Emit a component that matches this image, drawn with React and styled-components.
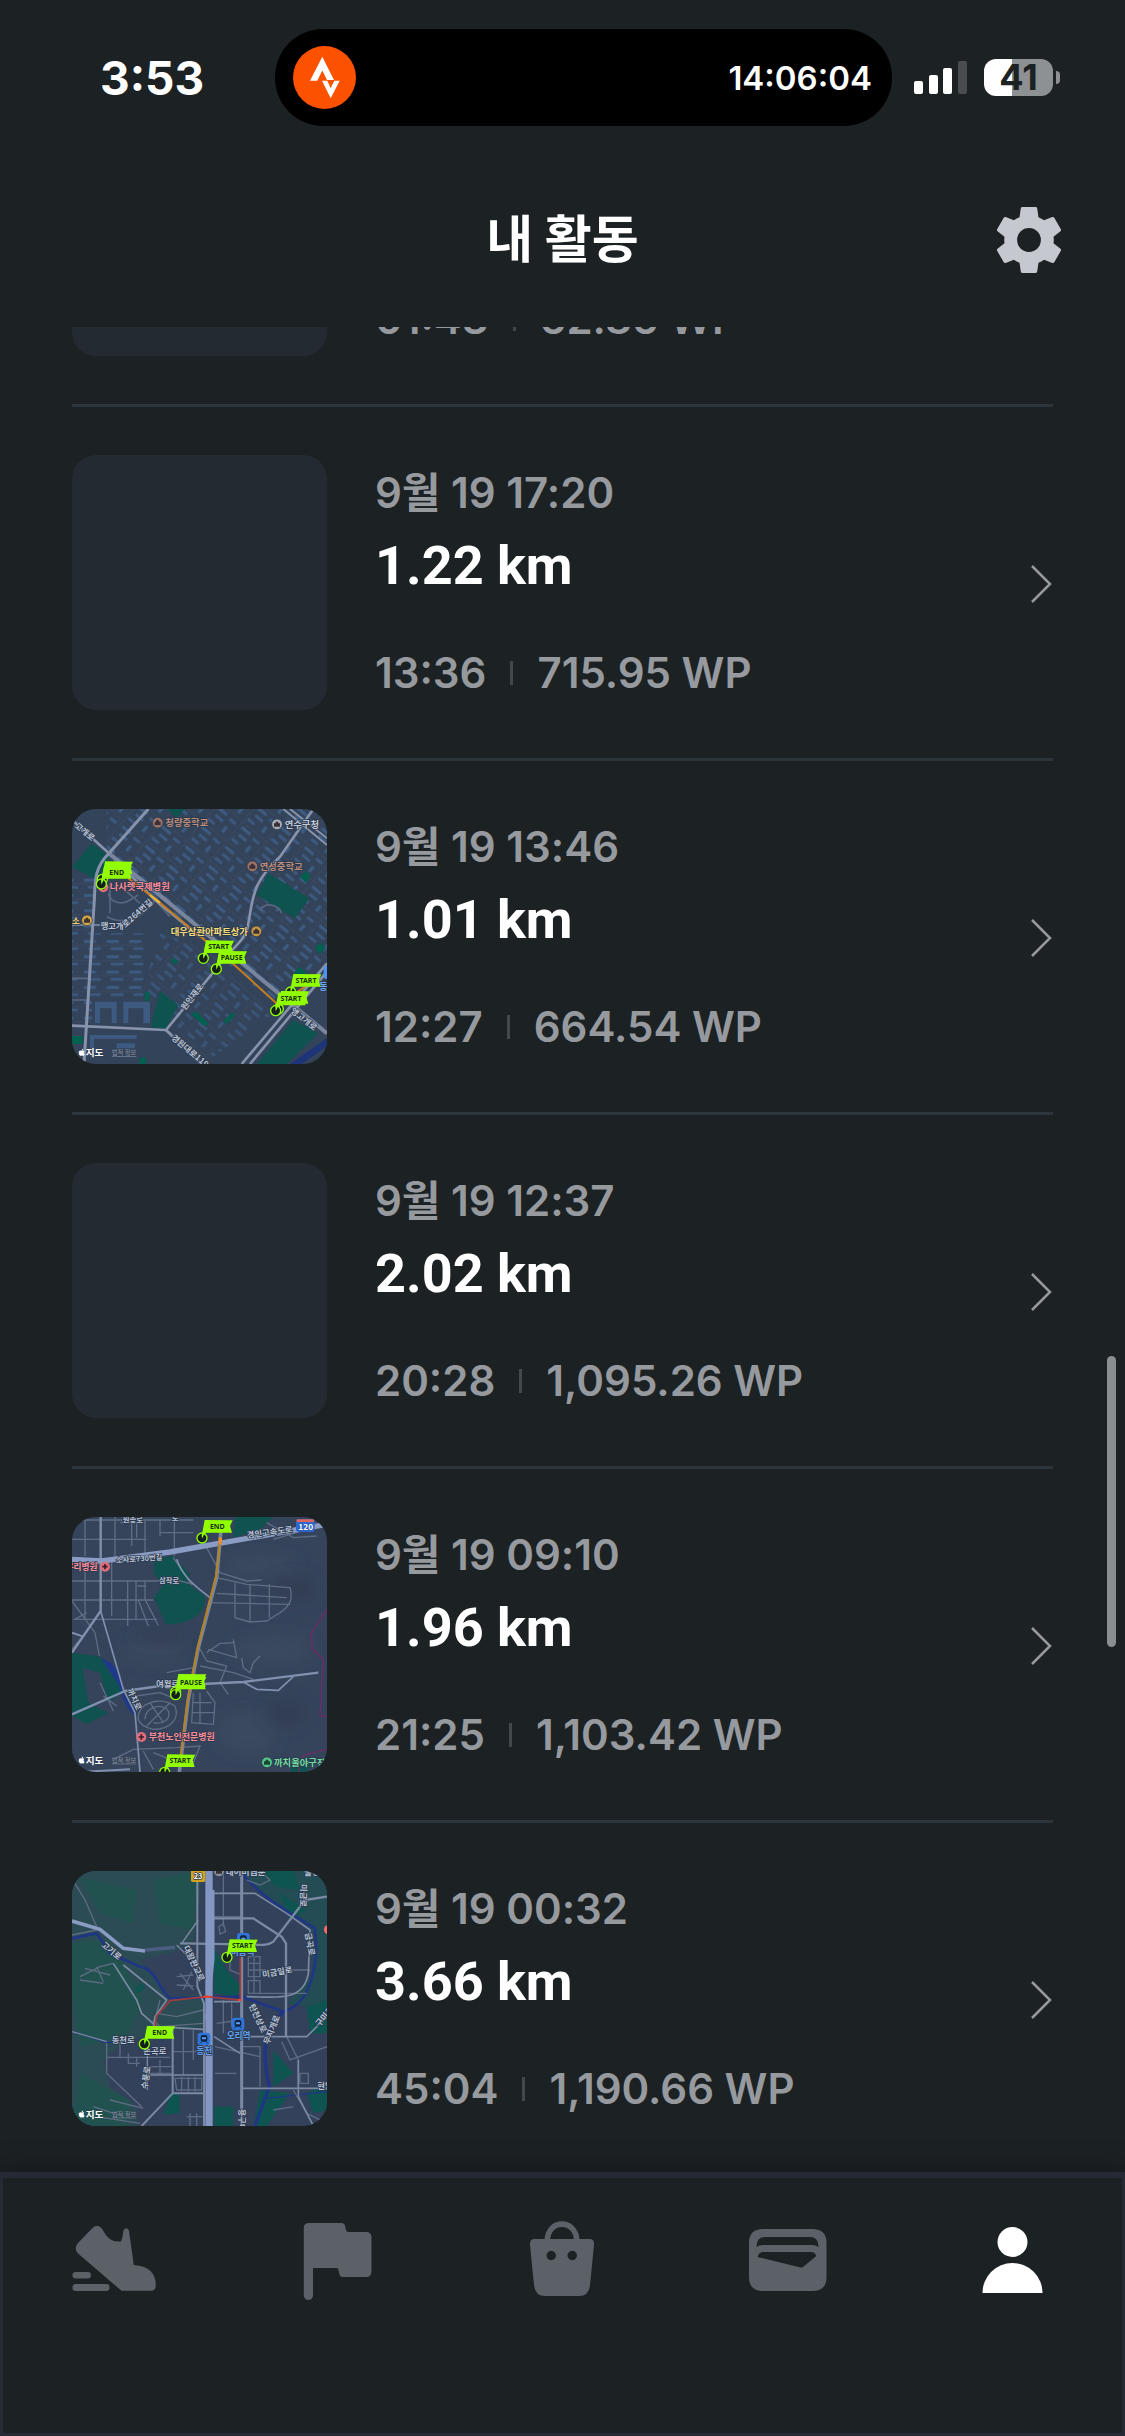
import React, { useEffect, useRef } from "react";
import styled, { createGlobalStyle } from "styled-components";
import { FaApple } from "react-icons/fa";

const sans = `Inter, "Noto Sans CJK KR", sans-serif`;

const GlobalStyle = createGlobalStyle`
  * {
    box-sizing: border-box;
  }

  body {
    margin: 0;
    background-color: #1c2124;
    color: #fff;
    font-family: ${sans};
  }
`;

const Screen = styled.div`
  display: flex;
  flex-direction: column;
  height: 100vh;
  overflow: hidden;
`;

const StatusBar = styled.div`
  display: grid;
  grid-template-columns: 275fr 617fr 233fr;
  align-items: center;
  height: 155px;
  flex-shrink: 0;
`;

const Clock = styled.time`
  padding-left: 100px;
  font-size: 46px;
  font-weight: 700;
  line-height: 54px;
`;

const Island = styled.div`
  display: flex;
  align-items: center;
  justify-content: space-between;
  height: 97px;
  padding: 0 20px 0 18px;
  border-radius: 48px;
  background-color: #000;
  font-size: 33px;
  font-weight: 600;
`;

const Signals = styled.div`
  display: flex;
  align-items: center;
  gap: 17px;
  padding-left: 22px;
`;

const Battery = styled.div`
  position: relative;
  width: 69px;
  height: 37px;
  border-radius: 12px;
  background: linear-gradient(to right, #fff 41%, #8e9193 41%);
  color: #1c2124;
  font-size: 36px;
  font-weight: 700;
  line-height: 36px;
  text-align: center;

  &::after {
    content: "";
    position: absolute;
    top: 12px;
    right: -7px;
    width: 4px;
    height: 13px;
    border-radius: 0 4px 4px 0;
    background-color: #8e9193;
  }
`;

const Header = styled.header`
  display: grid;
  grid-template-columns: 1fr auto 1fr;
  align-items: center;
  height: 172px;
  padding: 0 63px 2px;
  flex-shrink: 0;
`;

const Title = styled.h1`
  grid-column: 2;
  margin: 0;
  padding-bottom: 8px;
  font-family: "Noto Sans CJK KR", sans-serif;
  font-size: 51px;
  font-weight: 700;
  line-height: 72px;
`;

const IconButton = styled.button`
  justify-self: end;
  padding: 0;
  border: 0;
  background: none;
  color: #c5c8cf;

  svg {
    display: block;
  }
`;

const Content = styled.main`
  position: relative;
  flex: 1;
  min-height: 0;
`;

const List = styled.ul`
  height: 100%;
  margin: 0;
  padding: 0 72px;
  overflow-y: auto;
  list-style: none;
  scrollbar-width: none;
`;

const ScrollThumb = styled.div`
  position: absolute;
  top: 1029px;
  right: 9px;
  width: 9px;
  height: 291px;
  border-radius: 5px;
  background-color: #8b8e90;
`;

const Row = styled.a`
  display: flex;
  align-items: center;
  gap: 48px;
  padding: 48px 0;
  border-bottom: 3px solid #2c353c;
  color: #969a9f;
  text-decoration: none;
`;

const Thumb = styled.div`
  width: 255px;
  height: 255px;
  flex-shrink: 0;
  overflow: hidden;
  border-radius: 24px;
  background-color: #242a32;

  svg {
    display: block;
  }
`;

const Info = styled.div`
  flex: 1;
  font-size: 42px;
  font-weight: 600;
  line-height: 54px;
`;

const Distance = styled.div`
  margin: 10px 0 44px;
  color: #fff;
  font-family: Roboto, sans-serif;
  font-size: 54px;
  font-weight: 700;
  line-height: 72px;
`;

const Meta = styled.div`
  display: flex;
  align-items: center;
  gap: 24px;
`;

const Separator = styled.span`
  width: 3px;
  height: 24px;
  background-color: #43484c;
`;

const TabBar = styled.nav`
  position: relative;
  display: grid;
  grid-template-columns: repeat(5, 1fr);
  align-items: start;
  height: 264px;
  padding-top: 40px;
  flex-shrink: 0;
  border-top: 3px solid #262a34;
  background-color: #1c2124;
  box-shadow: inset 0 0 0 3px #262a34, 0 -6px 24px rgba(0, 0, 0, 0.25);
`;

const Tab = styled.button`
  display: flex;
  justify-content: center;
  padding: 0;
  border: 0;
  background: none;
  color: ${(props) => (props.$active ? "#fff" : "#5b6167")};
`;

const Label = styled.text`
  fill: ${(props) => props.$color || "#b9c3d6"};
  stroke: #29364a;
  stroke-width: ${(props) => props.$halo || 4}px;
  paint-order: stroke;
  font-family: "Noto Sans CJK KR", sans-serif;
  font-size: ${(props) => props.$size || 25}px;
  font-weight: ${(props) => props.$weight || 700};
`;

const FlagText = styled.text`
  fill: #1a3010;
  font-family: "Noto Sans", sans-serif;
  font-size: 21px;
  font-weight: 700;
  text-anchor: middle;
`;

function Marker({ x, y, label }) {
  return (
    <g transform={`translate(${x} ${y})`}>
      <path
        d="M8 -54 L92 -53 L84 -36 L90 -16 H12 L5 -6 L0 -12 Z"
        fill="#91ff00"
      />
      <circle r="15" fill="#14201c" stroke="#91ff00" strokeWidth="4" />
      <path d="M0 2 L-1 -14 L8 -14 Z" fill="#91ff00" />
      {label && (
        <FlagText x="46" y="-28">
          {label}
        </FlagText>
      )}
    </g>
  );
}

function Poi({ x, y, color, mark = "#3b3037" }) {
  return (
    <g transform={`translate(${x} ${y})`}>
      <circle r="16" fill={color} stroke="#29364a" strokeWidth="2" />
      <path d="M-9 7 V-3 H-4 V-8 H4 V-3 H9 V7 Z" fill={mark} />
    </g>
  );
}

function Hospital({ x, y }) {
  return (
    <g transform={`translate(${x} ${y})`}>
      <circle r="15" fill="#e06c7c" />
      <path d="M-8 0 H8 M0 -8 V8" stroke="#3a1c2a" strokeWidth="5" />
    </g>
  );
}

function Station({ x, y }) {
  return (
    <g transform={`translate(${x} ${y})`}>
      <rect x="-19" y="-19" width="38" height="38" rx="9" fill="#2f74d8" />
      <rect x="-10" y="-12" width="20" height="20" rx="6" fill="#10233f" />
      <path d="M-6 -5 H6 V1 H-6 Z" fill="#5b9df0" />
      <path d="M-7 8 L-11 13 M7 8 L11 13" stroke="#10233f" strokeWidth="3" />
    </g>
  );
}

function MapCredit({ y }) {
  return (
    <>
      <FaApple x="53" y={y - 23} size={24} color="#fff" />
      <Label x="77" y={y} $size={29} $color="#fff" $halo={1}>
        지도
      </Label>
      <Label
        x="155"
        y={y - 3}
        $size={19}
        $weight={400}
        $color="#8d96a6"
        $halo={1}
        textDecoration="underline"
      >
        법적 정보
      </Label>
    </>
  );
}

function YeonsuMap() {
  return (
    <svg width="255" height="255" viewBox="36 27 765 765">
      <defs>
        <pattern
          id="blocks"
          width="92"
          height="76"
          patternUnits="userSpaceOnUse"
          patternTransform="rotate(40)"
        >
          <path d="M0 2 H92 M2 0 V76" stroke="#424f67" strokeWidth="1.5" />
          <path
            d="M10 12 H44 V21 H10 Z M58 16 H82 V25 H58 Z M18 34 H48 V43 H18 Z M8 57 H34 V66 H8 Z M62 44 H72 V66 H62 Z"
            fill="#3d5a80"
          />
        </pattern>
        <pattern
          id="houses"
          width="68"
          height="46"
          patternUnits="userSpaceOnUse"
        >
          <path d="M4 6 H40 V15 H4 Z M16 28 H54 V36 H16 Z" fill="#3d5a80" />
          <path d="M0 22 H68" stroke="#424f67" strokeWidth="1.5" />
        </pattern>
      </defs>
      <rect x="36" y="27" width="765" height="765" fill="#33435a" />
      <path d="M140 27 H801 V520 L660 630 L140 165 Z" fill="url(#blocks)" />
      <path
        d="M300 400 L430 440 L640 640 L430 792 L250 560 Z"
        fill="url(#blocks)"
        opacity="0.8"
      />
      <path
        d="M36 230 H105 L95 670 H36 Z M105 400 H250 V600 H90 Z"
        fill="url(#houses)"
      />
      <path
        d="M105 605 H170 V670 H155 V625 H120 V670 H105 Z M190 605 H270 V670 H250 V625 H205 V670 H190 Z M90 705 H230 V716 H102 V745 H90 Z M170 730 H225 V745 H170 Z"
        fill="#3d5a80"
      />
      <g fill="#0f5350">
        <path d="M95 130 L150 170 L110 240 L36 200 Z" />
        <path d="M625 220 L748 295 L705 355 L590 285 Z" />
        <path d="M300 573 L355 615 L315 690 L272 680 Z" />
        <path d="M700 660 L775 700 L680 792 H590 Z" />
        <path d="M322 27 H375 L350 55 Z" />
      </g>
      <g fill="#026050">
        <path d="M738 213 L752 230 L738 248 L720 230 Z" />
        <path d="M781 428 L797 444 L780 462 L764 444 Z" />
        <path d="M718 500 L738 515 L722 535 L702 518 Z" />
        <path d="M405 632 L445 668 L436 680 L395 645 Z" />
        <path d="M518 636 L526 645 L500 672 L490 664 Z" />
        <path d="M255 575 H268 V602 H255 Z M36 708 H68 V732 H36 Z M238 773 H258 V792 H238 Z" />
        <path d="M338 472 L355 485 L346 494 L332 482 Z" />
      </g>
      <path d="M690 792 L801 715 V738 L725 792 Z" fill="#1e3478" />
      <g fill="none" stroke="#58677f" strokeWidth="5">
        <path d="M145 280 C150 310 190 315 210 300 L235 285 M140 350 C200 380 250 350 285 300" />
        <path d="M150 250 V340 M200 275 L240 310 M36 535 H90 M36 600 H90" />
        <path d="M600 330 C620 300 660 320 665 340 M285 300 L330 350" />
      </g>
      <g fill="none" stroke="#8793ab" strokeLinejoin="round">
        <path d="M36 60 L147 160 L285 300 L420 410" strokeWidth="8" />
        <path d="M147 160 L801 700" strokeWidth="12" stroke="#78859d" />
        <path d="M265 27 L147 160 C105 200 105 240 103 300 L72 792" strokeWidth="9" />
        <path
          d="M760 27 L660 170 C575 250 580 290 565 370 C560 420 520 440 490 480 L318 690 L36 677"
          strokeWidth="8"
        />
        <path d="M318 690 L425 792" strokeWidth="9" />
        <path d="M801 490 L545 792 M801 515 L570 792" strokeWidth="8" />
        <path d="M670 27 L801 135 M690 27 L801 115" strokeWidth="6" />
        <path d="M36 375 H120" strokeWidth="4" />
      </g>
      <path
        d="M205 235 L290 300 L440 425 L520 492 L655 615 L735 560"
        fill="none"
        stroke="#c67c1c"
        strokeWidth="6"
      />
      <path d="M270 285 L300 308" stroke="#f7b928" strokeWidth="6" />

      <Label x="42" y="80" transform="rotate(40 42 80)">
        고개로
      </Label>
      <Label x="122" y="386">맹고개</Label>
      <Label x="196" y="384" transform="rotate(-42 196 384)">
        로264번길
      </Label>
      <Label x="375" y="632" transform="rotate(-52 375 632)">
        원인재로
      </Label>
      <Label x="690" y="636" transform="rotate(38 690 636)">
        앵고개로
      </Label>
      <Label x="332" y="716" transform="rotate(40 332 716)">
        경원대로119
      </Label>
      <Poi x={293} y={68} color="#9c7466" />
      <Label x="316" y="79" $size={28} $color="#bb8d7c">
        청량중학교
      </Label>
      <Poi x={651} y={73} color="#a9afb8" />
      <Label x="674" y="83" $size={28} $color="#c2cad6">
        연수구청
      </Label>
      <Poi x={577} y={199} color="#9c7466" />
      <Label x="599" y="209" $size={28} $color="#bb8d7c">
        연성중학교
      </Label>
      <Hospital x={130} y={262} />
      <Label x="149" y="271" $size={28} $color="#ff8c98">
        나사렛국제병원
      </Label>
      <Label x="36" y="371" $color="#f2d06b">
        소
      </Label>
      <Poi x={81} y={361} color="#d5a83e" />
      <Label x="332" y="404" $size={28} $color="#f7dc78">
        대우삼환아파트상가
      </Label>
      <Poi x={589} y={394} color="#c9993f" />
      <rect x="791" y="498" width="20" height="38" rx="6" fill="#4c93f5" />
      <Label x="777" y="569" $size={28} $color="#6da9ff">
        동
      </Label>
      <Marker x={127} y={238} />
      <Marker x={124} y={252} label="END" />
      <Marker x={430} y={475} label="START" />
      <Marker x={469} y={507} label="PAUSE" />
      <Marker x={692} y={576} label="START" />
      <Marker x={655} y={627} />
      <Marker x={647} y={632} label="START" />
      <MapCredit y={768} />
    </svg>
  );
}

function BucheonMap() {
  return (
    <svg width="255" height="255" viewBox="36 33 765 765">
      <defs>
        <filter id="hills">
          <feGaussianBlur stdDeviation="22" />
        </filter>
      </defs>
      <rect x="36" y="33" width="765" height="765" fill="#35445b" />
      <g fill="#3a495f" filter="url(#hills)">
        <ellipse cx="600" cy="180" rx="110" ry="30" />
        <ellipse cx="280" cy="430" rx="90" ry="36" />
        <ellipse cx="640" cy="430" rx="120" ry="40" />
        <ellipse cx="560" cy="680" rx="90" ry="60" />
      </g>
      <g fill="#303d52" filter="url(#hills)">
        <ellipse cx="700" cy="250" rx="70" ry="40" />
        <ellipse cx="300" cy="390" rx="80" ry="20" />
        <ellipse cx="680" cy="620" rx="60" ry="40" />
      </g>
      <g fill="#10524f">
        <path d="M282 160 L340 150 L390 205 L380 230 L435 270 C440 330 380 355 318 355 L282 275 L310 235 L282 205 Z" />
        <path d="M525 33 H640 L600 70 L520 95 Z" />
        <path d="M36 440 L110 450 C170 480 195 520 185 560 L145 590 L120 500 L68 485 L85 590 L145 620 L80 655 L36 630 Z" />
        <path d="M700 770 L760 760 L740 798 H690 Z" />
      </g>
      <path
        d="M125 460 C160 460 195 520 190 560 C210 590 220 610 222 630 C195 600 185 570 178 540 Z"
        fill="#20388a"
      />
      <g fill="none" stroke="#5f6d84" strokeWidth="4">
        <path d="M36 42 H400 M36 100 H260 M36 225 H360 L400 235 M36 282 H280 M40 340 H290" />
        <path d="M75 33 V150 M165 33 V150 M215 33 V120 M255 42 V150 M343 33 V150 M75 160 V340" />
        <path d="M155 170 V330 M203 225 V360 M228 225 V340 M255 225 V280 L295 358 M235 282 L265 360" />
        <path d="M181 50 H230 V95 M300 42 V90 M300 80 H400 M232 240 H258" />
        <path d="M36 285 L105 380 L118 450 M45 340 L80 320 M60 400 L36 430" />
        <path d="M470 215 L560 235 L690 245 C700 280 690 300 660 320 L620 345 L570 348 L525 335 V230 M450 290 L690 295 M570 235 V348 M628 235 V335 M470 262 L680 275" />
        <path d="M340 155 L395 235 M440 125 L480 200 L560 225 L605 222" />
        <path d="M415 420 L440 465 L500 480 L480 530 L505 565 M445 430 L530 455 L520 400 M420 480 L520 500 L580 520 M440 440 L480 412 L525 410" />
        <path d="M545 455 L550 485 L570 500 L580 470 L600 450 M320 500 L400 485" />
        <path d="M228 570 L300 560 L350 580 M235 640 C230 590 300 570 345 600 C360 640 330 670 280 670 C250 665 240 655 235 640 M255 640 C255 600 310 590 325 615 C335 645 300 655 280 650 M270 590 L310 650 M330 590 L260 660" />
        <path d="M400 560 L395 650 L460 655 L465 590 L440 555 M420 560 V650 M400 590 H455 M398 620 H465" />
        <path d="M160 760 L220 730 L350 725 L420 720 L400 770 M250 735 L280 790 M280 740 L330 760" />
        <path d="M120 530 L160 615 M130 570 L170 600" />
        <path d="M620 50 L700 95 L770 90 M640 100 L760 65" />
      </g>
      <g fill="none" stroke="#8090ad" strokeLinejoin="round">
        <path d="M122 33 V315 L70 390 L36 440" strokeWidth="7" />
        <path d="M122 315 L190 550 L225 620 L240 798" strokeWidth="5" />
        <path
          d="M36 160 L125 165 L330 138 L801 55"
          strokeWidth="16"
          stroke="#8a9cc4"
        />
        <path d="M36 625 L195 555 L300 540 L550 528 L775 500" strokeWidth="7" />
        <path d="M550 528 L590 550 L655 553 L700 512" strokeWidth="5" />
        <path d="M350 160 C370 220 420 250 450 275" strokeWidth="5" />
        <path d="M36 380 L70 392 M60 798 L210 790" strokeWidth="6" />
      </g>
      <path
        d="M801 310 L752 385 L758 430 L790 460 L780 630 L801 632 M801 730 L730 748 L715 798"
        fill="none"
        stroke="#6e2c66"
        strokeWidth="4"
      />
      <path
        d="M484 60 L470 215 L415 425 L385 580 L358 798"
        fill="none"
        stroke="#77859d"
        strokeWidth="11"
      />
      <path
        d="M482 95 L468 210 L412 430 L382 590 L362 750"
        fill="none"
        stroke="#b8811f"
        strokeWidth="6"
      />
      <path d="M481 95 L480 115" stroke="#ff8a1e" strokeWidth="9" />

      <Label x="188" y="47" $size={22}>
        원종로
      </Label>
      <Label x="335" y="43" $size={22}>
        로
      </Label>
      <Label x="168" y="171" $size={22} transform="rotate(-4 168 171)">
        소사로730번길
      </Label>
      <Label x="562" y="97" transform="rotate(-8 562 97)">
        경인고속도로
      </Label>
      <Label x="297" y="230" $size={22}>
        삼작로
      </Label>
      <Label x="288" y="544">여월로</Label>
      <Label x="200" y="552" transform="rotate(65 200 552)">
        까치로
      </Label>
      <rect x="708" y="40" width="56" height="38" rx="8" fill="#2d68d2" />
      <path d="M710 48 V40 H762 V48 Z" fill="#e0665c" />
      <Label x="715" y="72" $color="#fff" $halo={1}>
        120
      </Label>
      <Label x="17" y="192" $size={26} $color="#ff8c98">
        우리병원
      </Label>
      <Hospital x={135} y={182} />
      <Hospital x={244} y={693} />
      <Label x="266" y="703" $size={27} $color="#ff8c98">
        부천노인전문병원
      </Label>
      <Poi x={621} y={769} color="#58c58b" mark="#174634" />
      <Label x="642" y="779" $size={28} $color="#74dca0">
        까치울야구장
      </Label>
      <Marker x={426} y={96} label="END" />
      <Marker x={347} y={558} />
      <Marker x={347} y={566} label="PAUSE" />
      <Marker x={314} y={799} label="START" />
      <MapCredit y={773} />
    </svg>
  );
}

function BundangMap() {
  return (
    <svg width="255" height="255" viewBox="36 33 765 765">
      <rect x="36" y="33" width="765" height="765" fill="#33415a" />
      <path
        d="M36 33 H430 L400 250 L330 280 L240 300 L330 410 L440 400 L430 500 L200 540 L130 600 L150 680 L230 740 V798 H36 Z"
        fill="#2b4c54"
      />
      <g fill="#21554e" opacity="0.75">
        <path d="M36 250 L150 240 L250 420 L200 530 L60 560 L36 400 Z" />
        <path d="M280 60 L410 33 L400 210 L300 190 Z" />
        <path d="M60 640 L210 720 L200 798 H36 Z" />
        <path d="M60 50 L230 90 L220 190 L120 160 Z" />
      </g>
      <path
        d="M540 33 H801 V450 L680 430 L760 340 L745 200 L640 130 Z"
        fill="#244c54"
      />
      <g fill="#0e5450">
        <path d="M462 265 L500 330 L545 380 L530 410 L462 400 Z" />
        <path d="M330 700 L358 700 V760 L310 765 Z M462 740 L520 740 V798 H462 Z" />
        <path d="M225 385 L245 368 L255 385 L235 400 Z M640 570 L700 640 L640 680 Z" />
        <path d="M740 440 L801 420 V520 L750 520 Z M660 100 L740 150 L690 180 Z M601 690 L690 700 L620 798 H580 Z" />
        <path d="M740 700 L801 670 V750 L760 760 Z M600 33 H700 L720 90 L650 80 Z" />
      </g>
      <g fill="none" stroke="#1f3585" strokeWidth="8">
        <path d="M540 33 C600 110 690 160 765 205 C775 300 760 430 670 455 L545 410 L330 415 C290 380 290 330 240 320 L150 280 L110 220 L36 235" />
        <path
          d="M670 455 C600 520 610 600 628 680 L585 798"
          strokeWidth="10"
        />
        <path
          d="M36 515 L140 548 L230 545 M620 715 L801 695"
          strokeWidth="4"
        />
      </g>
      <g fill="none" stroke="#5e6c83" strokeWidth="4">
        <path d="M45 70 L75 120 L110 200 M36 225 L110 210 M60 350 L120 320 L160 310 M60 360 L130 370 M75 325 L150 345 M110 320 L130 365" />
        <path d="M350 350 L400 345 M360 340 L400 390 M370 390 L395 335 M350 375 L400 378" />
        <path d="M140 550 V640 L245 740 M180 545 V590 M140 592 H330 M205 580 V610 H240 M230 590 V620 M262 620 H335 M260 640 H335 M300 600 V640" />
        <path d="M280 480 L300 500 L430 490 M300 420 L290 460 L350 470 L430 450" />
        <path d="M340 575 H430 M370 510 V645 M400 510 V600 M345 655 H425 V690 H350 Z M365 650 V695 M385 650 V695 M405 650 V695" />
        <path d="M490 33 V200 M477 200 L490 190 L497 215 L480 222 Z M462 100 H540 M545 170 H462" />
        <path d="M565 290 H600 V350 H565 Z M565 362 H600 V400 H565 Z M565 310 H600 M565 330 H600 M582 290 V400 M510 280 V330 L545 345" />
        <path d="M470 490 L540 480 M490 420 V520 M515 430 V500 M545 560 H600 V680 M465 640 L530 640 M465 560 L600 590" />
        <path d="M680 530 L715 600 V680 M720 640 H745 V670 H720 Z M665 545 L690 600 L801 560 M600 330 H750 M600 400 L740 400" />
        <path d="M100 740 L190 770 M150 720 L250 745 M110 770 L240 790 M380 770 H430 M390 760 V798 M410 760 V798" />
        <path d="M700 690 L740 760 L801 790 M640 750 L700 740 M600 33 L630 60 L600 75 L560 60" />
      </g>
      <g fill="none" stroke="#7c89a3" strokeWidth="7" strokeLinejoin="round">
        <path
          d="M160 310 L230 420 L245 460 L290 500 L430 508 M190 315 L320 420 L285 470 L280 500"
          strokeWidth="5"
        />
        <path
          d="M462 100 H585 L680 160 L750 210 L745 340 C730 430 640 410 560 410"
          strokeWidth="5"
        />
        <path d="M462 175 H580 L665 230 L678 250 V530 M801 110 L735 120 L640 245 C620 260 600 253 550 253 L360 250" />
        <path d="M545 33 V798" strokeWidth="9" />
        <path
          d="M412 60 V380 L432 430 V798 M338 510 V700 H430 M338 700 L245 798"
          strokeWidth="6"
        />
        <path
          d="M462 425 H540 M570 530 H740 L801 470 M462 530 L540 580 M545 685 H801 M715 600 V710 L760 798"
          strokeWidth="5"
        />
        <path d="M262 645 H430 M262 575 V690 M36 515 L140 545" strokeWidth="4" />
        <path d="M365 250 L415 180 M350 255 L405 310" strokeWidth="4" />
      </g>
      <path
        d="M36 183 L120 208 L190 265 L255 273"
        fill="none"
        stroke="#8a9bc4"
        strokeWidth="11"
      />
      <path d="M255 270 L345 262" stroke="#4c5d7f" strokeWidth="11" />
      <path d="M447 33 V798" stroke="#8496c2" strokeWidth="22" />
      <path
        d="M459 90 V300 L440 480"
        fill="none"
        stroke="#8496c2"
        strokeWidth="9"
      />
      <path
        d="M541 285 V420 L440 410 L330 422 L290 468 L285 500"
        fill="none"
        stroke="#a03a3c"
        strokeWidth="5"
      />
      <path d="M430 410 H450 M534 420 H544" stroke="#ff3b25" strokeWidth="6" />

      <rect x="393" y="22" width="43" height="44" rx="5" fill="#d3a31f" />
      <Label x="401" y="56" $size={22} $color="#fff">
        23
      </Label>
      <Poi x={477} y={34} color="#8a919c" />
      <Label x="497" y="46" $size={26}>
        네이버웹툰
      </Label>
      <Label x="122" y="257" transform="rotate(40 122 257)">
        고기로
      </Label>
      <Label x="370" y="262" transform="rotate(65 370 262)">
        대왕판교로
      </Label>
      <Label x="722" y="72" transform="rotate(92 722 72)">
        미금로
      </Label>
      <Label x="735" y="220" transform="rotate(80 735 220)">
        금곡로
      </Label>
      <Label x="608" y="353" transform="rotate(-10 608 353)">
        미금일로
      </Label>
      <Label x="566" y="437" transform="rotate(65 566 437)">
        탄천상로
      </Label>
      <Label x="626" y="555" transform="rotate(-68 626 555)">
        무지개로
      </Label>
      <Label x="778" y="502" transform="rotate(-50 778 502)">
        구미로
      </Label>
      <Label x="772" y="686">현암</Label>
      <Label x="155" y="550">동천로</Label>
      <Label x="250" y="583">손곡로</Label>
      <Label x="262" y="688" transform="rotate(-82 262 688)">
        수풍로
      </Label>
      <Label x="538" y="746" transform="rotate(90 538 746)">
        용구대로
      </Label>
      <Label x="733" y="46">불정</Label>
      <circle cx="806" cy="209" r="14" fill="#ff6a70" />
      <Station x={550} y={238} />
      <Label x="512" y="285" $size={26} $color="#5f9ff0">
        미금역
      </Label>
      <Station x={534} y={492} />
      <Label x="500" y="537" $size={26} $color="#5f9ff0">
        오리역
      </Label>
      <Station x={432} y={537} />
      <Label x="409" y="582" $size={26} $color="#5f9ff0">
        동천
      </Label>
      <Marker x={501} y={292} label="START" />
      <Marker x={253} y={552} label="END" />
      <MapCredit y={773} />
    </svg>
  );
}

function SettingsIcon() {
  return (
    <svg width="66" height="66" viewBox="2 2 20 20" fill="currentColor">
      <path d="M19.43 12.98c.04-.32.07-.64.07-.98s-.03-.66-.07-.98l2.11-1.65c.19-.15.24-.42.12-.64l-2-3.46c-.12-.22-.39-.3-.61-.22l-2.49 1c-.52-.4-1.08-.73-1.69-.98l-.38-2.65C14.46 2.18 14.25 2 14 2h-4c-.25 0-.46.18-.49.42l-.38 2.65c-.61.25-1.17.59-1.69.98l-2.49-1c-.23-.09-.49 0-.61.22l-2 3.46c-.13.22-.07.49.12.64l2.11 1.65c-.04.32-.07.65-.07.98s.03.66.07.98l-2.11 1.65c-.19.15-.24.42-.12.64l2 3.46c.12.22.39.3.61.22l2.49-1c.52.4 1.08.73 1.69.98l.38 2.65c.03.24.24.42.49.42h4c.25 0 .46-.18.49-.42l.38-2.65c.61-.25 1.17-.59 1.69-.98l2.49 1c.23.09.49 0 .61-.22l2-3.46c.12-.22.07-.49-.12-.64l-2.11-1.65zM12 15.6a3.6 3.6 0 1 1 0-7.2 3.6 3.6 0 0 1 0 7.2z" />
    </svg>
  );
}

function StravaIcon() {
  return (
    <svg width="63" height="63" viewBox="0 0 63 63">
      <circle cx="31.5" cy="31.5" r="31.5" fill="#fc5200" />
      <path
        d="M29.3 10.7 L41 34 H34 L29.3 24.5 L24.3 34.7 H17 Z M29 34.7 H34.3 L37.7 42.3 L41.3 34.7 H46.7 L37.7 52.3 Z"
        fill="#fff"
      />
    </svg>
  );
}

function SignalIcon() {
  return (
    <svg width="53" height="33" viewBox="0 0 53 33" fill="#fff">
      <rect x="0" y="20" width="9" height="13" rx="2" />
      <rect x="15" y="14" width="9" height="19" rx="2" />
      <rect x="29" y="7" width="9" height="26" rx="2" />
      <rect x="44" y="0" width="9" height="33" rx="2" opacity="0.2" />
    </svg>
  );
}

const tabs = [
  {
    name: "운동",
    icon: (
      <>
        <rect x="4.5" y="57" width="18.5" height="6.5" rx="3.2" />
        <rect x="4.5" y="69" width="37" height="7" rx="3.2" />
        <path d="M24.5 13 Q29 9 33 12.5 Q34.5 14 36 17 Q41 26.5 50 26.5 H53 Q55 22 55.3 16 Q56 13.3 58.3 13.3 Q60.5 13.3 61 16 L65.8 50 Q87.5 51.5 87.8 70 Q88 75.8 83 75.8 H53.5 L10 38.5 Q5.5 33.5 10 28 Z" />
      </>
    ),
  },
  {
    name: "챌린지",
    icon: (
      <path d="M16 8 H49 Q51.5 8 52 10.5 L53 15 Q53.5 17 55.5 17 H73 Q78.5 17 78.5 22.5 V56 Q78.5 62 73 62 H49.5 Q47 62 46.5 59.5 L45.3 54.5 Q45 53 43.5 53 H20 V80.5 A4.6 4.6 0 0 1 10.8 80.5 V13 Q10.8 8 16 8 Z" />
    ),
  },
  {
    name: "상점",
    icon: (
      <>
        <path
          d="M29.3 26 C29.3 3.5 58.7 3.5 58.7 26"
          fill="none"
          stroke="currentColor"
          strokeWidth="5.6"
        />
        <path
          fillRule="evenodd"
          d="M16.5 24 H71.5 Q76.5 24 76 30 L72 70 Q71 81 61 81 H27 Q17 81 16 70 L12 30 Q11.5 24 16.5 24 Z M33.2 35.8 a4.7 4.7 0 1 0 0.1 0 Z M54.2 35.8 a4.7 4.7 0 1 0 0.1 0 Z"
        />
      </>
    ),
  },
  {
    name: "지갑",
    icon: (
      <path
        fillRule="evenodd"
        d="M20 14 H69.5 Q83.5 14 83.5 28 V62 Q83.5 76 69.5 76 H20 Q6 76 6 62 V28 Q6 14 20 14 Z M13.5 32 V31 Q14 22 22 22 H67 Q75 22 75.5 31 V32 Q73 30 69 30 H20 Q16 30 13.5 32 Z M20 37 H68 Q72 37 73.3 41 L60 52 Q59 52.8 57.5 52.5 L14.5 42 Q16 37 20 37 Z"
      />
    ),
  },
  {
    name: "내 활동",
    active: true,
    icon: (
      <>
        <circle cx="44.5" cy="27" r="15" />
        <path d="M14.5 78 A30 30 0 0 1 74.5 78 Z" />
      </>
    ),
  },
];

const activities = [
  { date: "9월 19 18:02", distance: "0.12 km", time: "01:43", points: "62.86 WP" },
  { date: "9월 19 17:20", distance: "1.22 km", time: "13:36", points: "715.95 WP" },
  {
    date: "9월 19 13:46",
    distance: "1.01 km",
    time: "12:27",
    points: "664.54 WP",
    map: YeonsuMap,
  },
  { date: "9월 19 12:37", distance: "2.02 km", time: "20:28", points: "1,095.26 WP" },
  {
    date: "9월 19 09:10",
    distance: "1.96 km",
    time: "21:25",
    points: "1,103.42 WP",
    map: BucheonMap,
  },
  {
    date: "9월 19 00:32",
    distance: "3.66 km",
    time: "45:04",
    points: "1,190.66 WP",
    map: BundangMap,
  },
];

function Activity({ date, distance, time, points, map: Map }) {
  return (
    <li>
      <Row href="#">
        <Thumb>{Map && <Map />}</Thumb>
        <Info>
          <div>{date}</div>
          <Distance>{distance}</Distance>
          <Meta>
            <span>{time}</span>
            <Separator />
            <span>{points}</span>
          </Meta>
        </Info>
        <svg width="24" height="42" viewBox="0 0 24 42" fill="none">
          <path d="M3 4 L21 22 L3 40" stroke="currentColor" strokeWidth="2.5" />
        </svg>
      </Row>
    </li>
  );
}

export default function App() {
  const listRef = useRef(null);

  useEffect(() => {
    listRef.current.scrollTop = 274;
  }, []);

  return (
    <>
      <GlobalStyle />
      <Screen>
        <StatusBar>
          <Clock>3:53</Clock>
          <Island>
            <StravaIcon />
            <time>14:06:04</time>
          </Island>
          <Signals>
            <SignalIcon />
            <Battery>41</Battery>
          </Signals>
        </StatusBar>

        <Header>
          <Title>내 활동</Title>
          <IconButton type="button" aria-label="설정">
            <SettingsIcon />
          </IconButton>
        </Header>

        <Content>
          <List ref={listRef}>
            {activities.map((activity) => (
              <Activity key={activity.date} {...activity} />
            ))}
          </List>
          <ScrollThumb />
        </Content>

        <TabBar>
          {tabs.map(({ name, icon, active }) => (
            <Tab key={name} type="button" aria-label={name} $active={active}>
              <svg width="90" height="90" viewBox="0 0 90 90" fill="currentColor">
                {icon}
              </svg>
            </Tab>
          ))}
        </TabBar>
      </Screen>
    </>
  );
}
